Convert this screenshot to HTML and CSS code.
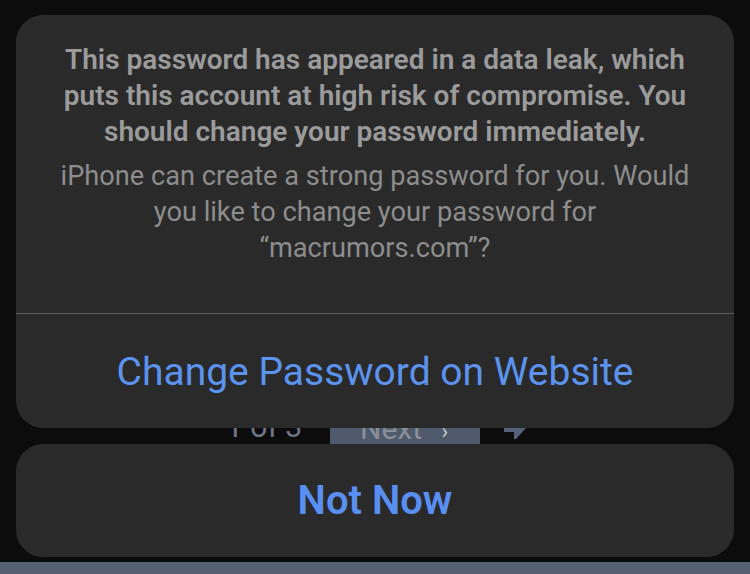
FILE: index.html
```html
<!DOCTYPE html>
<html>
<head>
<meta charset="utf-8">
<link rel="stylesheet" href="styles.css">
</head>
<body>
<div class="page">
  <div class="toolbar">
    <span class="count">1 of 3</span>
    <span class="next">Next <span class="chev">&#x203A;</span></span>
    <svg class="share" width="24" height="11" viewBox="0 0 24 11"><path d="M0 0 L22 0 L12 11 L10 11 L10 4 L0 4 Z" fill="#56627a"/></svg>
  </div>
  <div class="strip"></div>
</div>
<div class="sheet">
  <div class="card alert">
    <div class="message">
      <p class="warn">This password has appeared in a data leak, which<br>puts this account at high risk of compromise. You<br>should change your password immediately.</p>
      <p class="info">iPhone can create a strong password for you. Would<br>you like to change your password for<br>“macrumors.com”?</p>
    </div>
    <div class="action">Change Password on Website</div>
  </div>
  <div class="card cancel">Not Now</div>
</div>
</body>
</html>
```
FILE: styles.css
```css
html, body {
  margin: 0;
  padding: 0;
  width: 750px;
  height: 574px;
  overflow: hidden;
  background: #0c0c0c;
  font-family: Roboto, "Liberation Sans", sans-serif;
}
.page {
  position: relative;
  height: 574px;
  display: flex;
  flex-direction: column;
}
.toolbar {
  margin-top: 412px;
  height: 32px;
  display: flex;
  align-items: flex-end;
  padding-left: 226px;
}
.count {
  color: #6f7888;
  font-size: 30px;
  line-height: 34px;
  width: 104px;
}
.next {
  width: 150px;
  height: 32px;
  background: #4f5a6d;
  color: #8a8f98;
  font-size: 30px;
  line-height: 34px;
  box-sizing: border-box;
  padding-left: 30px;
}
.chev { font-size: 22px; margin-left: 12px; color: #c8ccd2; }
.share { margin-left: 24px; margin-bottom: 5px; }
.strip {
  margin-top: auto;
  height: 12px;
  background: #566073;
}
.sheet {
  position: absolute;
  left: 0;
  top: 0;
  width: 750px;
  box-sizing: border-box;
  padding: 15px 16px 0;
  display: flex;
  flex-direction: column;
  gap: 16px;
}
.card {
  background: #2a2a2a;
  border-radius: 27px;
}
.alert {
  height: 413px;
  display: flex;
  flex-direction: column;
}
.message {
  height: 299px;
  box-sizing: border-box;
  border-bottom: 1px solid #5c5c5c;
  padding: 27px 20px 0;
  text-align: center;
}
.message p {
  margin: 0;
  font-size: 28px;
  line-height: 36px;
  white-space: nowrap;
}
.warn {
  color: #9b9b9b;
  font-weight: 600;
}
.info {
  color: #8d8d8d;
  font-size: 27.2px !important;
  margin-top: 8px !important;
}
.action {
  flex: 1;
  display: flex;
  align-items: center;
  justify-content: center;
  color: #5b93ee;
  font-size: 39px;
  padding-top: 2px;
}
.cancel {
  height: 113px;
  display: flex;
  align-items: center;
  justify-content: center;
  color: #5a8ff2;
  font-size: 40px;
  font-weight: 600;
}
```
